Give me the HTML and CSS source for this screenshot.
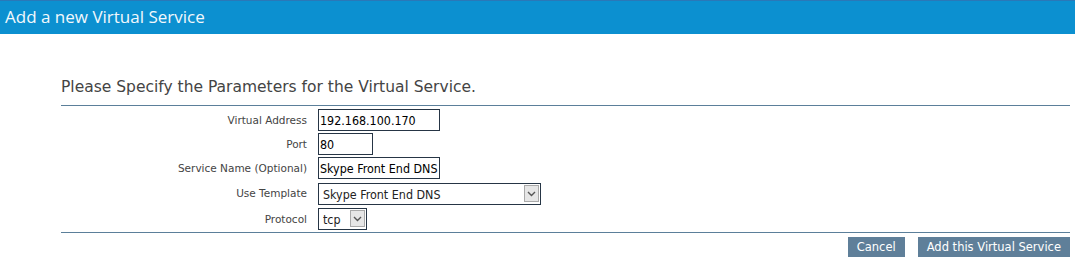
FILE: index.html
```html
<!DOCTYPE html>
<html>
<head>
  <title>Add a new Virtual Service</title>
  <link rel="stylesheet" href="styles.css">
</head>
<body>

  <div class="title-bar">Add a new Virtual Service</div>

  <div class="panel">
    <h2 class="panel-heading">Please Specify the Parameters for the Virtual Service.</h2>

    <form class="service-form" onsubmit="return false">
      <div class="field-grid">
        <label for="vsAddress">Virtual Address</label>
        <div class="field"><input type="text" id="vsAddress" class="text-input wide" value="192.168.100.170"></div>

        <label for="vsPort">Port</label>
        <div class="field"><input type="text" id="vsPort" class="text-input short" value="80"></div>

        <label for="vsName">Service Name (Optional)</label>
        <div class="field"><input type="text" id="vsName" class="text-input wide" value="Skype Front End DNS"></div>

        <label for="vsTemplate">Use Template</label>
        <div class="field">
          <span class="select-box template">
            <select id="vsTemplate">
              <option>Skype Front End DNS</option>
            </select>
            <span class="select-arrow"><svg width="9" height="6" viewBox="0 0 9 6"><path d="M1 1 L4.5 4.5 L8 1" fill="none" stroke="#555" stroke-width="1.4"/></svg></span>
          </span>
        </div>

        <label for="vsProtocol">Protocol</label>
        <div class="field">
          <span class="select-box protocol">
            <select id="vsProtocol">
              <option>tcp</option>
              <option>udp</option>
            </select>
            <span class="select-arrow"><svg width="9" height="6" viewBox="0 0 9 6"><path d="M1 1 L4.5 4.5 L8 1" fill="none" stroke="#555" stroke-width="1.4"/></svg></span>
          </span>
        </div>
      </div>

      <div class="form-actions">
        <button type="button" class="btn">Cancel</button>
        <button type="submit" class="btn">Add this Virtual Service</button>
      </div>
    </form>
  </div>

</body>
</html>
```

FILE: styles.css
```css
body {
  margin: 0;
  background-color: white;
  font-family: "DejaVu Sans", Verdana, sans-serif;
  color: #444;
}

.title-bar {
  background-color: #0c90d0;
  border-top: 1px solid #2a78b8;
  color: #f2f8fc;
  font-family: "Open Sans", "DejaVu Sans", sans-serif;
  font-size: 17px;
  height: 33px;
  line-height: 32px;
  padding-left: 5px;
}

.panel {
  margin: 0 5px 0 61px;
}

.panel-heading {
  font-family: "DejaVu Sans", Verdana, sans-serif;
  font-weight: normal;
  font-size: 15.5px;
  line-height: 18px;
  color: #444;
  margin: 44px 0 9px;
}

.field-grid {
  display: grid;
  grid-template-columns: 246px 1fr;
  column-gap: 11px;
  row-gap: 2px;
  border-top: 1px solid #5b7f9a;
  border-bottom: 1px solid #5b7f9a;
  padding: 3px 0 2px;
}

.field-grid label {
  text-align: right;
  align-self: center;
  font-size: 10.5px;
  line-height: 12px;
  color: #444;
}

.field {
  display: flex;
  align-items: center;
}

.text-input {
  box-sizing: border-box;
  height: 22px;
  border: 1px solid #263545;
  padding: 0 1px;
  font-family: "DejaVu Sans Condensed", "DejaVu Sans", sans-serif;
  font-size: 12.4px;
  color: #000;
  outline: none;
}

.text-input.wide {
  width: 122px;
}

.text-input.short {
  width: 55px;
}

.select-box {
  position: relative;
  display: flex;
}

.select-box.template {
  margin-top: 2px;
}

.select-box.protocol {
  margin-top: 1px;
}

.select-box select {
  appearance: none;
  -webkit-appearance: none;
  box-sizing: border-box;
  height: 22px;
  border: 1px solid #263545;
  border-radius: 0;
  background: white;
  padding: 0 0 0 4px;
  font-family: "DejaVu Sans Condensed", "DejaVu Sans", sans-serif;
  font-size: 12.4px;
  color: #222;
  outline: none;
}

.select-box.template select {
  width: 223px;
}

.select-box.protocol select {
  width: 49px;
}

.select-arrow {
  position: absolute;
  top: 2px;
  right: 2px;
  width: 15px;
  height: 17px;
  box-sizing: border-box;
  border: 1px solid #a9a9a9;
  background-color: #e6e6e6;
  display: flex;
  align-items: center;
  justify-content: center;
  pointer-events: none;
}

.form-actions {
  display: flex;
  justify-content: flex-end;
  gap: 13px;
  margin-top: 4px;
}

.btn {
  height: 20px;
  padding: 0 9px;
  background-color: #5f7f99;
  color: white;
  border: none;
  border-radius: 0;
  font-family: "DejaVu Sans", Verdana, sans-serif;
  font-size: 11.5px;
  cursor: pointer;
}

.btn:hover {
  background-color: #4f6f89;
}
```
